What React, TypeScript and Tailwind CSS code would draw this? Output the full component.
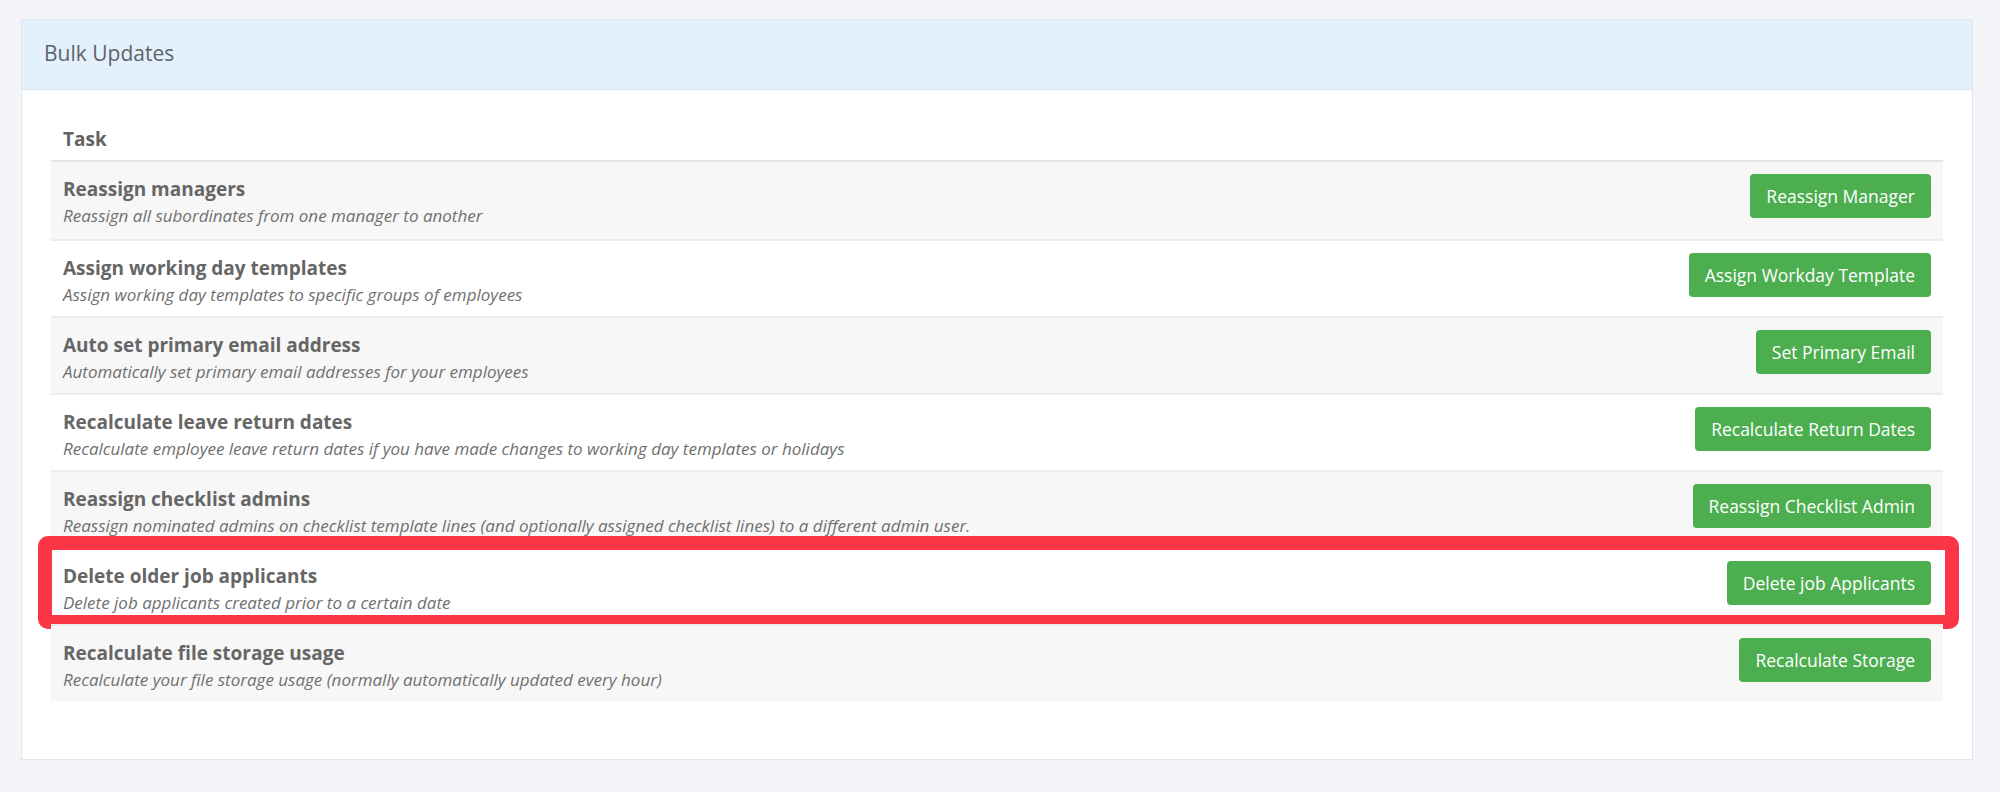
import React from "react";

type Task = { title: string; desc: string; button: string; highlight?: boolean };

const tasks: Task[] = [
  { title: "Reassign managers", desc: "Reassign all subordinates from one manager to another", button: "Reassign Manager" },
  { title: "Assign working day templates", desc: "Assign working day templates to specific groups of employees", button: "Assign Workday Template" },
  { title: "Auto set primary email address", desc: "Automatically set primary email addresses for your employees", button: "Set Primary Email" },
  { title: "Recalculate leave return dates", desc: "Recalculate employee leave return dates if you have made changes to working day templates or holidays", button: "Recalculate Return Dates" },
  { title: "Reassign checklist admins", desc: "Reassign nominated admins on checklist template lines (and optionally assigned checklist lines) to a different admin user.", button: "Reassign Checklist Admin" },
  { title: "Delete older job applicants", desc: "Delete job applicants created prior to a certain date", button: "Delete job Applicants", highlight: true },
  { title: "Recalculate file storage usage", desc: "Recalculate your file storage usage (normally automatically updated every hour)", button: "Recalculate Storage" },
];

export default function App() {
  return (
    <div
      className="min-h-[792px] w-full bg-[#f3f5f9] pl-[21px] pr-[27px] pt-[19px] pb-[32px]"
      style={{ fontFamily: '"Open Sans", "Noto Sans", sans-serif' }}
    >
      <div className="border border-[#e2e6ea] bg-white">
        <div className="flex h-[70px] items-center border-b border-[#dde3ea] bg-[#e3f1fc] px-[22px]">
          <span className="text-[21px] text-[#5f6368] -mt-[1px]">Bulk Updates</span>
        </div>
        <div className="px-[29px] pt-[29px] pb-[58px]">
          <div className="flex h-[43px] items-center border-b-2 border-[#e4e4e4] px-3">
            <span className="text-[19px] font-bold text-[#636363] -mt-[1px]">Task</span>
          </div>
          {tasks.map((t, i) => (
            <div
              key={t.title}
              className={`relative flex h-[77px] items-start justify-between px-3 pt-[12px] ${
                i > 0 ? "border-t-2 border-[#ececec]" : ""
              } ${i % 2 === 0 ? "bg-[#f7f7f7]" : "bg-white"}`}
            >
              <div className="flex flex-col mt-[1px]">
                <span className="text-[19px] leading-[29px] font-bold text-[#666666]">{t.title}</span>
                <span className="text-[17px] leading-[24px] italic text-[#707070]">{t.desc}</span>
              </div>
              <button className="h-[44px] shrink-0 rounded-[4px] bg-[#4cae4f] px-[16px] text-[17.5px] text-white">
                {t.button}
              </button>
              {t.highlight && (
                <div className="pointer-events-none absolute -left-[13px] -right-[16px] -top-[13px] -bottom-[5px] rounded-[10px] border-[14px] border-[#fb3545]" />
              )}
            </div>
          ))}
        </div>
      </div>
    </div>
  );
}
